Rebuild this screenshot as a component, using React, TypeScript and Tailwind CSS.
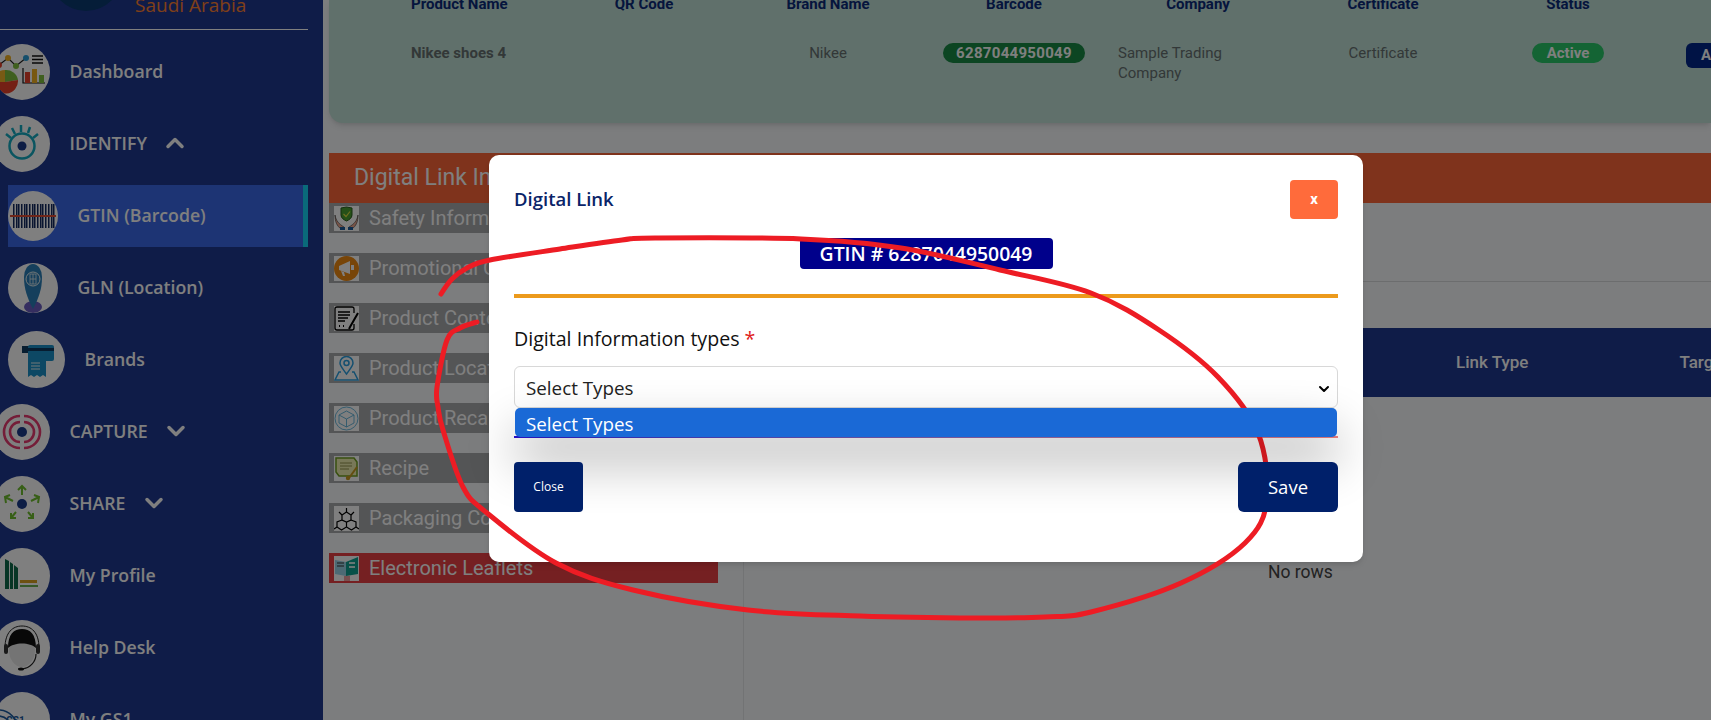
import React from "react";
import { ChevronDown, ChevronUp } from "lucide-react";

// Icons, top level ones are drawn from the page's left edge (circle starts at -6)
const DashboardIcon = () => (
  <svg viewBox="-6 0 56 56" className="w-full h-full">
    <path d="M5 38 L-7 38 A12 12 0 0 1 5 26 Z" fill="#f0b428" />
    <path d="M5 38 L5 26 A12 12 0 0 1 18 36 Z" fill="#7fbf3f" />
    <path d="M5 38 L18 36 A12.500 12.500 0 0 1 -7 38 Z" fill="#e8402a" />
    <polyline points="-1,21 8,14 16,22 26,14" fill="none" stroke="#222" strokeWidth="1.200" />
    <circle cx="-1" cy="21" r="3" fill="#e8402a" />
    <circle cx="8" cy="14" r="3" fill="#f0b020" />
    <circle cx="16" cy="22" r="3" fill="#7fbf3f" />
    <circle cx="26" cy="14" r="3" fill="#2a9fd8" />
    <path d="M32 12h11M32 15.500h11M32 19h11" stroke="#111" strokeWidth="1.500" />
    <path d="M23 24 V39 H45" fill="none" stroke="#111" strokeWidth="1.200" />
    <rect x="25" y="28" width="5" height="11" fill="#e8402a" />
    <rect x="32" y="25" width="5" height="14" fill="#f0b020" />
    <rect x="39" y="31" width="5" height="8" fill="#7fbf3f" />
  </svg>
);

const EyeIcon = () => (
  <svg viewBox="-6 0 56 56" className="w-full h-full" fill="none">
    <circle cx="22" cy="30" r="12.500" stroke="#14aac0" strokeWidth="2.500" />
    <circle cx="22" cy="30" r="4.500" fill="#1a3a8a" />
    <path d="M6 18 L11 22 M12 12 L15 18 M21 9 V16 M30 11 L28 17 M38 18 L33 22" stroke="#14aac0" strokeWidth="2.500" />
  </svg>
);

const BarcodeIcon = () => {
  const bars = [3, 6, 8, 11, 14, 16, 19, 22, 24, 27, 30, 32, 35, 38, 41, 43];
  return (
    <svg viewBox="0 0 50 50" className="w-full h-full">
      {bars.map((x) => (
        <rect key={x} x={x + 2} y="13" width="1.500" height="24" fill="#152a60" />
      ))}
      <rect x="2" y="24" width="46" height="2" fill="#e04a30" />
    </svg>
  );
};

const PinIcon = () => (
  <svg viewBox="0 0 50 50" className="w-full h-full">
    <ellipse cx="25" cy="44" rx="9" ry="6" fill="#6a5cc0" />
    <path d="M25 46 C19 34 16 26 16 14 A9 13 0 0 1 34 14 C34 26 31 34 25 46 Z" fill="#2a7fb8" />
    <circle cx="25" cy="16" r="7" fill="none" stroke="#e8f0f0" strokeWidth="1" />
    <path d="M22 11h6v10h-6zM22 16h6M25 11v10" fill="none" stroke="#e8f0f0" strokeWidth="0.800" />
  </svg>
);

const BrandsIcon = () => (
  <svg viewBox="0 0 57 57" className="w-full h-full">
    <rect x="14" y="15" width="9" height="7" fill="#0f3a60" />
    <rect x="20" y="14" width="26" height="16" rx="2" fill="#1a90c8" />
    <rect x="20" y="17" width="26" height="3" fill="#0f3a60" />
    <path d="M20 26 H38 V46 L35 44 L32 46 L29 44 L26 46 L23 44 L20 46 Z" fill="#1a90c8" />
    <path d="M23 32h9M23 35h9M23 38h9" stroke="#e8f0f0" strokeWidth="1.200" />
  </svg>
);

const CaptureIcon = () => (
  <svg viewBox="-6 0 56 56" className="w-full h-full" fill="none" stroke="#e83a70" strokeWidth="2.600">
    <circle cx="22" cy="28" r="5" fill="#1a3a8a" stroke="none" />
    <path d="M20 18 A10 10 0 0 0 20 38 M24 18 A10 10 0 0 1 24 38" />
    <path d="M20 12 A16 16 0 0 0 20 44 M24 12 A16 16 0 0 1 24 44" />
  </svg>
);

const ShareIcon = () => (
  <svg viewBox="-6 0 56 56" className="w-full h-full" fill="none" stroke="#6fbf2f" strokeWidth="2">
    <circle cx="22" cy="28" r="5" fill="#1a3a8a" stroke="none" />
    <path d="M22 19 V10 M18 14 L22 10 L26 14" />
    <path d="M13 25 L5 21 M6 27 L5 21 L10 19" />
    <path d="M31 25 L39 21 M34 19 L39 21 L38 27" />
    <path d="M16 36 L11 42 M11 37 L11 42 L16 42" />
    <path d="M28 36 L33 42 M33 37 L33 42 L28 42" />
  </svg>
);

const ProfileIcon = () => (
  <svg viewBox="-6 0 56 56" className="w-full h-full">
    <path d="M5 11 L9 13 V41 H5 Z M10 14 L13 16 V41 H10 Z M14 17 L18 20 V41 H14 Z" fill="#0f6a4a" />
    <rect x="20" y="32" width="17" height="3" fill="#d8a020" />
    <rect x="20" y="37" width="18" height="2" fill="#6ab050" />
  </svg>
);

const HelpIcon = () => (
  <svg viewBox="-6 0 56 56" className="w-full h-full">
    <ellipse cx="22" cy="30" rx="13" ry="17" fill="#e8e8e8" />
    <path d="M8 28 C8 14 14 9 22 9 C30 9 36 14 36 28 C30 22 14 22 8 28 Z" fill="#111" />
    <path d="M5 28 C5 12 13 6 22 6 C31 6 39 12 39 28" fill="none" stroke="#222" strokeWidth="1" />
    <rect x="4" y="24" width="4" height="10" rx="2" fill="#333" />
    <rect x="36" y="24" width="4" height="10" rx="2" fill="#333" />
    <path d="M36 34 C36 42 30 48 22 49" fill="none" stroke="#222" strokeWidth="1.200" />
    <ellipse cx="21" cy="49" rx="3" ry="1.500" fill="#111" />
  </svg>
);

const Gs1Icon = () => (
  <svg viewBox="-6 0 56 56" className="w-full h-full" fill="none" stroke="#1a5aa0" strokeWidth="1.500">
    <path d="M-2 18 A20 20 0 0 1 18 38 M-2 24 A14 14 0 0 1 12 38" />
    <text x="6" y="32" fontSize="10" fontFamily="Roboto" fill="#1a5aa0" stroke="none" fontWeight="700">GS1</text>
  </svg>
);

const SafetyIcon = () => (
  <svg viewBox="0 0 25 25" className="w-full h-full">
    <path d="M7 2 L12.500 1 L18 2 V9 C18 12 15 14 12.500 15 C10 14 7 12 7 9 Z" fill="#4aa030" stroke="#2a6020" />
    <path d="M9.500 8 L12 10.500 L16 5.500" fill="none" stroke="#e0e040" strokeWidth="1.200" />
    <path d="M1 9 C2 15 5 18 10 21 V23 H7 C3 20 1 16 1 9 Z M24 9 C23 15 20 18 15 21 V23 H18 C22 20 24 16 24 9 Z" fill="#f0a890" stroke="#333" strokeWidth="0.600" />
    <rect x="6" y="21" width="5" height="3" fill="#1a5a9a" />
    <rect x="14" y="21" width="5" height="3" fill="#1a5a9a" />
  </svg>
);

const PromoIcon = () => (
  <svg viewBox="0 0 25 25" className="w-full h-full">
    <circle cx="12.500" cy="12.500" r="12.500" fill="#f08a10" />
    <path d="M5 10 L16 5 V18 L5 14 Z" fill="#fff" />
    <rect x="17" y="9" width="3" height="5" fill="#fff" />
    <path d="M7 15 L9 20 H11 L10 16 Z" fill="#fff" />
  </svg>
);

const ContractIcon = () => (
  <svg viewBox="0 0 25 25" className="w-full h-full" fill="none" stroke="#000" strokeWidth="1.300">
    <path d="M20 7 V3 Q20 1 18 1 H3 Q1 1 1 3 V22 Q1 24 3 24 H18 Q20 24 20 22 V18" />
    <path d="M4 6h12M4 9h12M4 12h10M4 15h7" />
    <path d="M24 7 L16 21 L15 23" strokeWidth="2" />
    <path d="M5 20h1M9 20h1" strokeWidth="2" />
  </svg>
);

const LocationIcon = () => (
  <svg viewBox="0 0 25 25" className="w-full h-full" fill="none" stroke="#2a9fe0" strokeWidth="1.500">
    <path d="M12.500 18 C9 13 6 10 6 7 A6.500 6.500 0 0 1 19 7 C19 10 16 13 12.500 18 Z" />
    <circle cx="12.500" cy="7" r="2.500" />
    <path d="M7 16 H5 L1 24 H24 L20 16 H18" />
  </svg>
);

const RecallIcon = () => (
  <svg viewBox="0 0 25 25" className="w-full h-full" fill="none" stroke="#5ab0d8" strokeWidth="0.900">
    <circle cx="12.500" cy="12.500" r="11.500" />
    <path d="M12.500 5 L20 9 V17 L12.500 21 L5 17 V9 Z M5 9 L12.500 13 L20 9 M12.500 13 V21" />
  </svg>
);

const RecipeIcon = () => (
  <svg viewBox="0 0 25 25" className="w-full h-full" fill="none">
    <path d="M2 2 H20 L23 6 V20 H5 L2 16 Z" fill="#f0f0b0" stroke="#70a020" strokeWidth="1.500" />
    <path d="M6 7h12M6 10h12M6 13h9" stroke="#884" strokeWidth="0.900" />
    <path d="M23 11 L15 22" stroke="#c89a20" strokeWidth="2" />
    <circle cx="14" cy="22" r="2.200" fill="#c89a20" />
  </svg>
);

const PackagingIcon = () => (
  <svg viewBox="0 0 25 25" className="w-full h-full" fill="none" stroke="#000" strokeWidth="1.200">
    <path d="M12.500 6 L17 9 V14 L12.500 16 L8 14 V9 Z" />
    <path d="M8 14 L3 16 V21 L7.500 24 L12.500 21 V16" />
    <path d="M17 14 L22 16 V21 L17.500 24 L12.500 21" />
    <path d="M12.500 6 V2 M8 9 L5 6 M17 9 L20 6 M3 21 L0 23 M22 21 L25 23" />
  </svg>
);

const LeafletIcon = () => (
  <svg viewBox="0 0 25 25" className="w-full h-full">
    <path d="M1 4 L12 6 V20 L1 18 Z" fill="#9ad4e8" />
    <path d="M12 6 L24 1 V18 L12 20 Z" fill="#0fa090" />
    <path d="M3 7h7M3 10h7" stroke="#333" strokeWidth="1" />
    <path d="M15 7h6M15 11h6" stroke="#cfeeea" strokeWidth="2" />
    <rect x="10" y="20" width="6" height="5" fill="#f0a0a0" />
  </svg>
);

type NavItemProps = {
  label: string;
  icon: React.ReactNode;
  sub?: boolean;
  active?: boolean;
  large?: boolean;
  chevron?: "up" | "down";
};

const NavItem: React.FC<NavItemProps> = ({ label, icon, sub, active, large, chevron }) => {
  return (
    <div className="h-[72px] flex items-center w-[308px]">
      <div
        className={
          "flex items-center gap-[19.5px] w-full " +
          (sub ? "ml-2 " : "-ml-[6px] ") +
          (active ? "h-[62px] bg-[#3a68e8] border-r-[5px] border-[#14d4f4]" : "")
        }
      >
        <div
          className={
            "rounded-full bg-[#fff] overflow-hidden shrink-0 -mt-px " +
            (large ? "w-[57px] h-[57px]" : sub ? "w-[50px] h-[50px]" : "w-[56px] h-[56px]")
          }
        >
          {icon}
        </div>
        <span className="text-[17.7px] font-semibold text-white -mt-[2px]">{label}</span>
        {chevron === "up" && <ChevronUp size={28} strokeWidth={3} className="text-white -ml-[5px] -mt-[2px]" />}
        {chevron === "down" && <ChevronDown size={28} strokeWidth={3} className="text-white -ml-[5px] -mt-[2px]" />}
      </div>
    </div>
  );
};

const cols = [
  "w-[178px]",
  "w-[110px]",
  "ml-[41px] w-[176px]",
  "ml-[27px] w-[142px]",
  "ml-[33px] w-[160px]",
  "ml-[20px] w-[170px]",
  "ml-[64px] w-[72px]",
  "ml-[82px] w-[100px]",
];

const heads = ["Product Name", "QR Code", "Brand Name", "Barcode", "Company", "Certificate", "Status"];

const infoItems = [
  { label: "Safety Information", icon: <SafetyIcon /> },
  { label: "Promotional Offers", icon: <PromoIcon /> },
  { label: "Product Contents", icon: <ContractIcon /> },
  { label: "Product Location", icon: <LocationIcon /> },
  { label: "Product Recall", icon: <RecallIcon /> },
  { label: "Recipe", icon: <RecipeIcon /> },
  { label: "Packaging Composition", icon: <PackagingIcon /> },
];

// hand drawn circle over the page, through the measured points
const scribble: [number, number][] = [
  [441, 294], [452, 279], [467, 268], [490, 260], [560, 249], [622, 240], [655, 238], [801, 239], [901, 248],
  [1000, 270], [1091, 293], [1159, 330], [1218, 377], [1258, 433], [1267, 500], [1245, 543], [1181, 583],
  [1091, 612], [1045, 617], [977, 618], [860, 616], [748, 610], [633, 590], [556, 563], [487, 513], [463, 487],
  [443, 430], [438, 407], [437, 387], [447, 340], [460, 328], [477, 322],
];

const scribblePath = scribble.reduce((d, p, i, a) => {
  if (i === 0) return `M${p[0]} ${p[1]}`;
  const p0 = a[i - 2] || p;
  const p1 = a[i - 1];
  const p3 = a[i + 1] || p;
  const c1 = [p1[0] + (p[0] - p0[0]) / 6, p1[1] + (p[1] - p0[1]) / 6];
  const c2 = [p[0] - (p3[0] - p1[0]) / 6, p[1] - (p3[1] - p1[1]) / 6];
  return `${d} C${c1[0]} ${c1[1]} ${c2[0]} ${c2[1]} ${p[0]} ${p[1]}`;
}, "");

const App: React.FC = () => {
  return (
    <div className="relative w-[1711px] h-[720px] overflow-hidden flex bg-[#f8fafc] font-['Roboto',sans-serif]">
      {/* Sidebar */}
      <aside className="w-[323px] h-[720px] shrink-0 overflow-hidden bg-[#1e3890] font-['Open_Sans',sans-serif]">
        <div className="h-[29px] w-[308px] overflow-hidden border-b border-white flex box-content">
          <div className="w-[72px] h-[72px] rounded-full bg-[#0a3a70] -mt-[61px] ml-[50px] shrink-0" />
          <span className="ml-[13px] -mt-[8px] text-[19px] text-[#ff8030] leading-[26px]">Saudi Arabia</span>
        </div>
        <nav className="mt-[6px]">
          <NavItem label="Dashboard" icon={<DashboardIcon />} />
          <NavItem label="IDENTIFY" icon={<EyeIcon />} chevron="up" />
          <NavItem label="GTIN (Barcode)" icon={<BarcodeIcon />} sub active />
          <NavItem label="GLN (Location)" icon={<PinIcon />} sub />
          <NavItem label="Brands" icon={<BrandsIcon />} sub large />
          <NavItem label="CAPTURE" icon={<CaptureIcon />} chevron="down" />
          <NavItem label="SHARE" icon={<ShareIcon />} chevron="down" />
          <NavItem label="My Profile" icon={<ProfileIcon />} />
          <NavItem label="Help Desk" icon={<HelpIcon />} />
          <NavItem label="My GS1" icon={<Gs1Icon />} />
        </nav>
      </aside>

      {/* Page */}
      <main className="flex-1 min-w-0 overflow-hidden pl-[6px]">
        <section className="h-[123px] bg-[#c0e0d6] rounded-bl-[14px] pl-[82px] overflow-hidden text-[15px] shadow-md">
          <div className="flex -mt-[6px] h-[20px] items-center font-bold text-[#0a2a7a]">
            {heads.map((h, i) => (
              <div key={h} className={"shrink-0 " + cols[i] + (i === 0 ? "" : " text-center")}>
                {h}
              </div>
            ))}
          </div>
          <div className="flex mt-[29px] text-[#667070] leading-[20px] items-start">
            <div className={"shrink-0 font-bold " + cols[0]}>Nikee shoes 4</div>
            <div className={"shrink-0 " + cols[1]} />
            <div className={"shrink-0 text-center " + cols[2]}>Nikee</div>
            <div className={"shrink-0 " + cols[3]}>
              <div className="h-5 rounded-full bg-[#188a44] text-white font-bold text-center tracking-[0.3px]">6287044950049</div>
            </div>
            <div className={"shrink-0 " + cols[4]}>
              Sample Trading
              <br />
              Company
            </div>
            <div className={"shrink-0 text-center " + cols[5]}>Certificate</div>
            <div className={"shrink-0 " + cols[6]}>
              <div className="h-5 rounded-full bg-[#28c868] text-white font-bold text-center">Active</div>
            </div>
            <div className={"shrink-0 " + cols[7]}>
              <div className="h-[25px] rounded-md bg-[#00268a] text-white font-bold pl-[15px] leading-[25px]">Actions</div>
            </div>
          </div>
        </section>

        <div className="mt-[30px] h-[50px] bg-[#fe6638] pl-[25px] flex items-center text-[23px] text-white">
          Digital Link Information
        </div>

        <div className="flex h-[517px]">
          <div className="w-[415px] shrink-0 pr-[25px] border-r border-[#e4e6e8] flex flex-col gap-5">
            {infoItems.map((item) => (
              <div key={item.label} className="h-[30px] bg-[#a8aaac] flex items-center pl-[5px] gap-[10px]">
                <div className="w-[25px] h-[25px] bg-white shrink-0">{item.icon}</div>
                <span className="text-[20px] text-white whitespace-nowrap">{item.label}</span>
              </div>
            ))}
            <div className="h-[30px] bg-[#ea4044] flex items-center pl-[5px] gap-[10px]">
              <div className="w-[25px] h-[25px] bg-white shrink-0">
                <LeafletIcon />
              </div>
              <span className="text-[20px] text-white whitespace-nowrap">Electronic Leaflets</span>
            </div>
          </div>

          <div className="flex-1 min-w-0 overflow-hidden">
            <div className="h-[79px] border-b border-[#d8dadc]" />
            <div className="mt-[46px] h-[69px] bg-[#1e3890] flex items-center pl-[712px] text-[17px] font-medium text-white whitespace-nowrap">
              <span>Link Type</span>
              <span className="ml-[151px]">Target</span>
            </div>
            <div className="mt-[165px] pl-[524px] text-[17.5px] leading-[20px] text-[#444]">No rows</div>
          </div>
        </div>
      </main>

      {/* Backdrop */}
      <div className="absolute inset-0 bg-black/50" />

      {/* Modal */}
      <div className="absolute left-[489px] top-[155px] w-[874px] h-[407px] bg-white rounded-[10px] px-[25px] font-['Open_Sans',sans-serif] shadow-md">
        <div className="flex items-center justify-between pt-[25px] h-[64px]">
          <h2 className="text-[18.5px] font-semibold text-[#0a2468] -mt-px">Digital Link</h2>
          <button className="w-[48px] h-[39px] rounded bg-[#ff6b3b] text-white text-[15px] font-bold font-['Roboto',sans-serif]">x</button>
        </div>
        <div className="flex justify-center mt-[19px]">
          <div className="w-[253px] h-[31px] rounded-sm bg-[#00008b] text-white text-[19.4px] font-semibold text-center leading-[31px] whitespace-nowrap">
            GTIN # 6287044950049
          </div>
        </div>
        <div className="h-[4px] bg-[#ec9a1c] mt-[25px]" />
        <label className="block mt-[28px] text-[19.6px] leading-[26px] text-[#111]">
          Digital Information types <span className="text-[#e02020]">*</span>
        </label>
        <div className="relative mt-[14px]">
          <div className="h-[42px] rounded-md border border-[#d8d8d8] flex items-center justify-between pl-[11px] pr-[5px] text-[18.8px] text-[#222] pt-[3px]">
            Select Types
            <ChevronDown size={16} strokeWidth={3} className="text-black" />
          </div>
          <div className="absolute z-10 left-px right-px top-[42px] h-[29px] rounded-[5px] bg-[#1a69d6] text-white text-[18.8px] pl-[11px] leading-[32px] shadow-[0_24px_50px_rgba(0,0,0,0.33)]">
            Select Types
          </div>
        </div>
        <div className="mt-[28px] h-[2px] bg-gradient-to-r from-[#2a10d0] to-[#f08080]" />
        <div className="relative z-20 flex justify-between mt-[24px]">
          <button className="w-[69px] h-[50px] rounded bg-[#00206a] text-white text-[12px]">Close</button>
          <button className="w-[100px] h-[50px] rounded-md bg-[#00206a] text-white text-[18.5px]">Save</button>
        </div>
      </div>

      {/* Red marker annotation */}
      <svg className="absolute inset-0 w-full h-full pointer-events-none" viewBox="0 0 1711 720" fill="none">
        <path d={scribblePath} stroke="#ed1c24" strokeWidth="5" strokeLinecap="round" strokeLinejoin="round" />
      </svg>
    </div>
  );
};

export default App;
